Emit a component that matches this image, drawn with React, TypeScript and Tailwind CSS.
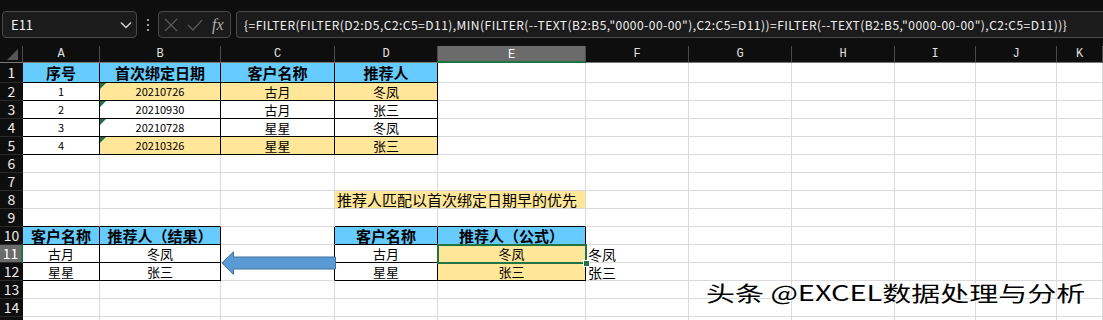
import type { ReactNode } from "react";

const COLS = ["A", "B", "C", "D", "E", "F", "G", "H", "I", "J", "K"];
const ROWS = Array.from({ length: 15 }, (_, i) => i + 1);

const FORMULA = `{=FILTER(FILTER(D2:D5,C2:C5=D11),MIN(FILTER(--TEXT(B2:B5,"0000-00-00"),C2:C5=D11))=FILTER(--TEXT(B2:B5,"0000-00-00"),C2:C5=D11))}`;

type Cell = {
  text: string;
  kind?: "head" | "num" | "note" | "spill";
  fill?: "blue" | "yellow";
  mark?: boolean;
};

// row,col (col 0 = A)
const cells: Record<string, Cell> = {
  "1,0": { text: "序号", kind: "head", fill: "blue" },
  "1,1": { text: "首次绑定日期", kind: "head", fill: "blue" },
  "1,2": { text: "客户名称", kind: "head", fill: "blue" },
  "1,3": { text: "推荐人", kind: "head", fill: "blue" },

  "2,0": { text: "1", kind: "num" },
  "2,1": { text: "20210726", kind: "num", fill: "yellow", mark: true },
  "2,2": { text: "古月", fill: "yellow" },
  "2,3": { text: "冬凤", fill: "yellow" },

  "3,0": { text: "2", kind: "num" },
  "3,1": { text: "20210930", kind: "num", mark: true },
  "3,2": { text: "古月" },
  "3,3": { text: "张三" },

  "4,0": { text: "3", kind: "num" },
  "4,1": { text: "20210728", kind: "num", mark: true },
  "4,2": { text: "星星" },
  "4,3": { text: "冬凤" },

  "5,0": { text: "4", kind: "num" },
  "5,1": { text: "20210326", kind: "num", fill: "yellow", mark: true },
  "5,2": { text: "星星", fill: "yellow" },
  "5,3": { text: "张三", fill: "yellow" },

  "8,3": { text: "推荐人匹配以首次绑定日期早的优先", kind: "note", fill: "yellow" },
  "8,4": { text: "", fill: "yellow" },

  "10,0": { text: "客户名称", kind: "head", fill: "blue" },
  "10,1": { text: "推荐人（结果）", kind: "head", fill: "blue" },
  "10,3": { text: "客户名称", kind: "head", fill: "blue" },
  "10,4": { text: "推荐人（公式）", kind: "head", fill: "blue" },

  "11,0": { text: "古月" },
  "11,1": { text: "冬凤" },
  "11,3": { text: "古月" },
  "11,4": { text: "冬凤", fill: "yellow" },
  "11,5": { text: "冬凤", kind: "spill" },

  "12,0": { text: "星星" },
  "12,1": { text: "张三" },
  "12,3": { text: "星星" },
  "12,4": { text: "张三", fill: "yellow" },
  "12,5": { text: "张三", kind: "spill" },
};

function inTable(r: number, c: number): boolean {
  if (r >= 1 && r <= 5 && c >= 0 && c <= 3) return true;
  if (r >= 10 && r <= 12 && c >= 0 && c <= 1) return true;
  if (r >= 10 && r <= 12 && c >= 3 && c <= 4) return true;
  return false;
}

function cellClass(r: number, c: number, cell?: Cell): string {
  const bg =
    cell?.fill === "blue"
      ? "bg-[#66ccff]"
      : cell?.fill === "yellow"
        ? "bg-[#ffe699]"
        : "bg-white";
  let right = "border-r-[#dadada]";
  if (inTable(r, c) || inTable(r, c + 1)) right = "border-r-black";
  else if (r === 8 && c === 3) right = "border-r-[#ffe699]";
  const bottom =
    inTable(r, c) || inTable(r + 1, c) ? "border-b-black" : "border-b-[#dadada]";
  return `${bg} ${right} ${bottom}`;
}

function textClass(cell: Cell): string {
  switch (cell.kind) {
    case "head":
      return "justify-center text-[15px] font-bold";
    case "num":
      return "justify-center text-[11px]";
    case "note":
      return "justify-start pl-[2px] text-[15px]";
    case "spill":
      return "justify-start pl-[2px] text-[14px]";
    default:
      return "justify-center text-[13px]";
  }
}

function Chevron() {
  return (
    <svg width="12" height="8" viewBox="0 0 12 8" fill="none">
      <path d="M1 1.5 L6 6.5 L11 1.5" stroke="#d8d8d8" strokeWidth="1.3" />
    </svg>
  );
}

function FormulaBar() {
  return (
    <div className="flex h-[46px] items-start bg-[#0e0e0e] pl-[2px] pt-[11px]">
      <div className="flex h-[27px] w-[135px] items-center justify-between rounded-[4px] border border-[#4a4a4a] bg-[#1b1b1b] pl-[8px] pr-[4px] text-[13px] text-[#f2f2f2]">
        <span>E11</span>
        <Chevron />
      </div>
      <div className="flex h-[27px] w-[21px] flex-col items-center justify-center gap-[3px]">
        <span className="h-[2px] w-[2px] bg-[#9a9a9a]" />
        <span className="h-[2px] w-[2px] bg-[#9a9a9a]" />
        <span className="h-[2px] w-[2px] bg-[#9a9a9a]" />
      </div>
      <div className="flex h-[27px] w-[73px] items-center rounded-[4px] border border-[#4a4a4a] bg-[#1b1b1b] pl-[5px]">
        <svg width="14" height="14" viewBox="0 0 14 14" fill="none">
          <path d="M1 1 L13 13 M13 1 L1 13" stroke="#5a5a5a" strokeWidth="1.3" />
        </svg>
        <svg className="ml-[9px]" width="16" height="12" viewBox="0 0 16 12" fill="none">
          <path d="M1 6 L6 11 L15 1" stroke="#5a5a5a" strokeWidth="1.3" />
        </svg>
        <span className="ml-[9px] font-['Liberation_Serif',serif] text-[16px] italic leading-none text-[#b0b0b0]">
          fx
        </span>
      </div>
      <div className="ml-[5px] flex h-[27px] flex-1 items-center whitespace-nowrap rounded-l-[4px] border border-r-0 border-[#4a4a4a] bg-[#1b1b1b] pl-[7px] text-[12px] tracking-[0.48px] text-[#f2f2f2]">
        {FORMULA}
      </div>
    </div>
  );
}

function Sheet() {
  const out: ReactNode[] = [];

  // column header row
  out.push(
    <div key="corner" className="relative border-b border-r border-b-[#7a7a7a] border-r-[#4a4a4a] bg-[#0e0e0e]">
      <div className="absolute bottom-[2px] right-[4px] h-0 w-0 border-b-[11px] border-l-[11px] border-b-[#555] border-l-transparent" />
    </div>
  );
  COLS.forEach((col, c) => {
    const active = c === 4;
    out.push(
      <div
        key={`h${col}`}
        className={
          active
            ? "flex items-center justify-center border-b-2 border-r border-b-[#217346] border-r-[#4a4a4a] bg-[#6b6b6b] pt-[2px] text-[12px] text-white"
            : "flex items-center justify-center border-b border-r border-b-[#7a7a7a] border-r-[#4a4a4a] bg-[#0e0e0e] text-[12px] text-[#e0e0e0]"
        }
      >
        <span className="font-['Liberation_Mono',monospace]">{col}</span>
      </div>
    );
  });

  ROWS.forEach((r) => {
    const activeRow = r === 11;
    out.push(
      <div
        key={`r${r}`}
        className={
          activeRow
            ? "flex items-center justify-center border-b border-r-2 border-b-[#2a2a2a] border-r-[#217346] bg-[#6b6b6b] text-[14px] text-white"
            : "flex items-center justify-center border-b border-b-[#2a2a2a] bg-[#0e0e0e] text-[14px] text-[#ececec]"
        }
      >
        {r < 15 ? r : ""}
      </div>
    );
    COLS.forEach((_, c) => {
      const cell = cells[`${r},${c}`];
      out.push(
        <div
          key={`c${r}-${c}`}
          className={`relative flex items-center border-b border-r ${cellClass(r, c, cell)} ${cell ? textClass(cell) : ""}`}
        >
          {cell?.mark && (
            <div className="absolute left-0 top-0 h-0 w-0 border-r-[6px] border-t-[6px] border-r-transparent border-t-[#1e7145]" />
          )}
          {cell?.text && (
            <span className="relative z-10 whitespace-nowrap leading-none text-black">
              {cell.text}
            </span>
          )}
        </div>
      );
    });
  });

  return (
    <div className="relative grid grid-cols-[23px_77px_121px_114px_103px_148px_103px_103px_103px_81px_81px_46px] grid-rows-[17px_20px_repeat(14,18px)]">
      {out}

      {/* selected cell E11 */}
      <div className="absolute left-[437px] top-[198px] z-20 h-[20px] w-[150px] border-2 border-[#217346]" />
      <div className="absolute left-[583px] top-[214px] z-30 h-[7px] w-[7px] border border-white bg-[#217346]" />

      {/* arrow shape */}
      <svg
        className="absolute left-[221px] top-[205px] z-20"
        width="117"
        height="26"
        viewBox="0 0 117 26"
      >
        <path
          d="M1 12 L12.5 0.8 L12.5 6 L114.5 6 L114.5 18 L12.5 18 L12.5 23.5 Z"
          fill="#5b9bd5"
          stroke="#41719c"
          strokeWidth="1"
        />
      </svg>
    </div>
  );
}

export default function App() {
  return (
    <div className="relative h-[320px] w-[1103px] overflow-hidden bg-white font-['Noto_Sans_CJK_SC',sans-serif]">
      <div className="h-[3px] bg-[#1c1c1c]" />
      <div className="-mt-[3px]">
        <FormulaBar />
      </div>
      <Sheet />
      <div className="pointer-events-none absolute left-[706px] top-[277px] z-40 origin-left scale-x-[1.38] whitespace-nowrap text-[21px] text-black [text-shadow:1px_1px_0_#ffffff,-1px_-1px_0_#ffffff]">
        头条 @EXCEL数据处理与分析
      </div>
    </div>
  );
}
